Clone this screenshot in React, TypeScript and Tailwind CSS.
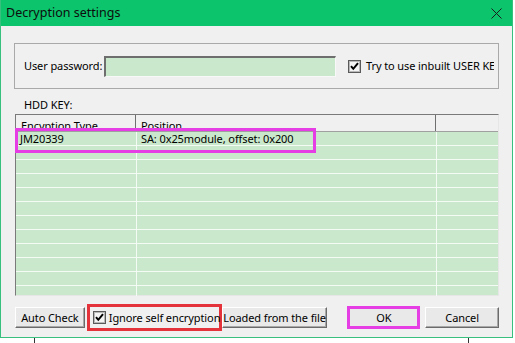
import React from "react";

function Check() {
  return (
    <svg width="13" height="13" viewBox="0 0 13 13" className="shrink-0">
      <rect x="0.5" y="0.5" width="12" height="12" fill="#e8e8e8" stroke="#5a5a5a" />
      <rect x="1.5" y="1.5" width="10" height="10" fill="#f4f4f4" stroke="#b8b8b8" />
      <path d="M3 6.2 L5.3 8.8 L10 3.2" stroke="#000" strokeWidth="2" fill="none" />
    </svg>
  );
}

const btn =
  "flex items-center justify-center h-[21px] bg-[#e9e9e9] border border-t-white border-l-white border-r-[#6b6b6b] border-b-[#6b6b6b] shadow-[inset_-1px_-1px_0_#a8a8a8] whitespace-nowrap";

export default function App() {
  const rows = Array.from({ length: 12 });
  return (
    <div className="w-[515px] h-[343px] bg-white overflow-hidden font-['Noto_Sans',sans-serif] text-[11px] tracking-[-0.1px] text-black leading-[16px]">
      <div className="w-[513px] h-[338px] border-l border-r border-b border-[#37c07e] bg-[#f0f0f0] flex flex-col">
        <div className="h-[26px] bg-[#0bc46b] flex items-center pl-[5px] pr-[10px] shrink-0">
          <span className="text-[12.5px] tracking-normal text-[#0d0d0d]">Decryption settings</span>
          <div className="flex-1" />
          <svg width="11" height="11" viewBox="0 0 11 11">
            <path d="M0.5 0.5 L10.5 10.5 M10.5 0.5 L0.5 10.5" stroke="#1b1b1b" strokeWidth="1" />
          </svg>
        </div>
        <div className="flex-1 flex flex-col px-[13px]">
          <div className="mt-[17px] h-[46px] border border-[#a9a9a9] flex items-center pl-[9px] shrink-0">
            <span className="w-[80px] shrink-0 whitespace-nowrap">User password:</span>
            <div className="w-[232px] h-[21px] bg-[#cae9cc] border-t-2 border-l-2 border-t-[#6e6e6e] border-l-[#6e6e6e] border-r border-b border-r-[#f8f8f8] border-b-[#f8f8f8] shrink-0" />
            <div className="ml-[12px] w-[146px] flex items-center overflow-hidden whitespace-nowrap shrink-0">
              <Check />
              <span className="ml-[5px]">Try to use inbuilt USER KEY</span>
            </div>
          </div>
          <div className="h-[25px] pt-[8px] pl-[10px] shrink-0">HDD KEY:</div>
          <div className="relative ml-[1px] w-[484px] h-[182px] border-t border-l border-[#7a7a7a] border-r border-b border-r-[#e6e6e6] border-b-[#e6e6e6] bg-[#cae8cb] shrink-0">
            <div className="flex h-[17px] bg-[#f0f0f0] border-b border-[#a0a0a0]">
              <div className="w-[120px] border-r border-[#6f6f6f] pl-[5px] pt-[3px] overflow-hidden whitespace-nowrap">Encyption Type</div>
              <div className="w-[300px] border-r border-[#6f6f6f] pl-[5px] pt-[3px] overflow-hidden whitespace-nowrap">Position</div>
              <div className="flex-1" />
            </div>
            <div className="h-[164px] overflow-hidden">
              {rows.map((_, i) => (
                <div key={i} className="flex h-[14px] border-b border-[#f4fbf4]">
                  <div className="w-[121px] border-r border-[#f4fbf4] pl-[4px] leading-[13px] whitespace-nowrap">
                    {i === 0 ? "JM20339" : ""}
                  </div>
                  <div className="w-[300px] border-r border-[#f4fbf4] pl-[4px] leading-[13px] whitespace-nowrap">
                    {i === 0 ? "SA: 0x25module, offset: 0x200" : ""}
                  </div>
                  <div className="flex-1" />
                </div>
              ))}
            </div>
            <div className="absolute left-[-1px] top-[13px] w-[301px] h-[25px] border-[3px] border-[#e43ee4]" />
          </div>
          <div className="mt-[8px] h-[27px] flex items-center shrink-0">
            <div className={`${btn} ml-[1px] w-[70px]`}>Auto Check</div>
            <div className="ml-[2px] w-[135px] h-[27px] border-[3px] border-[#e5333b] flex items-center pl-[3px] whitespace-nowrap">
              <Check />
              <span className="ml-[3px]">Ignore self encryption</span>
            </div>
            <div className={`${btn} w-[106px]`}>Loaded from the file</div>
            <div className="ml-[20px] w-[73px] h-[23px] border-[3px] border-[#e43ee4] bg-[#e9e9e9] flex items-center justify-center">OK</div>
            <div className={`${btn} ml-[5px] w-[74px]`}>Cancel</div>
          </div>
        </div>
      </div>
      <div className="flex h-[5px]">
        <div className="ml-[34px] w-[1px] h-full bg-[#333]" />
        <div className="ml-[433px] w-[1px] h-full bg-[#333]" />
      </div>
    </div>
  );
}
